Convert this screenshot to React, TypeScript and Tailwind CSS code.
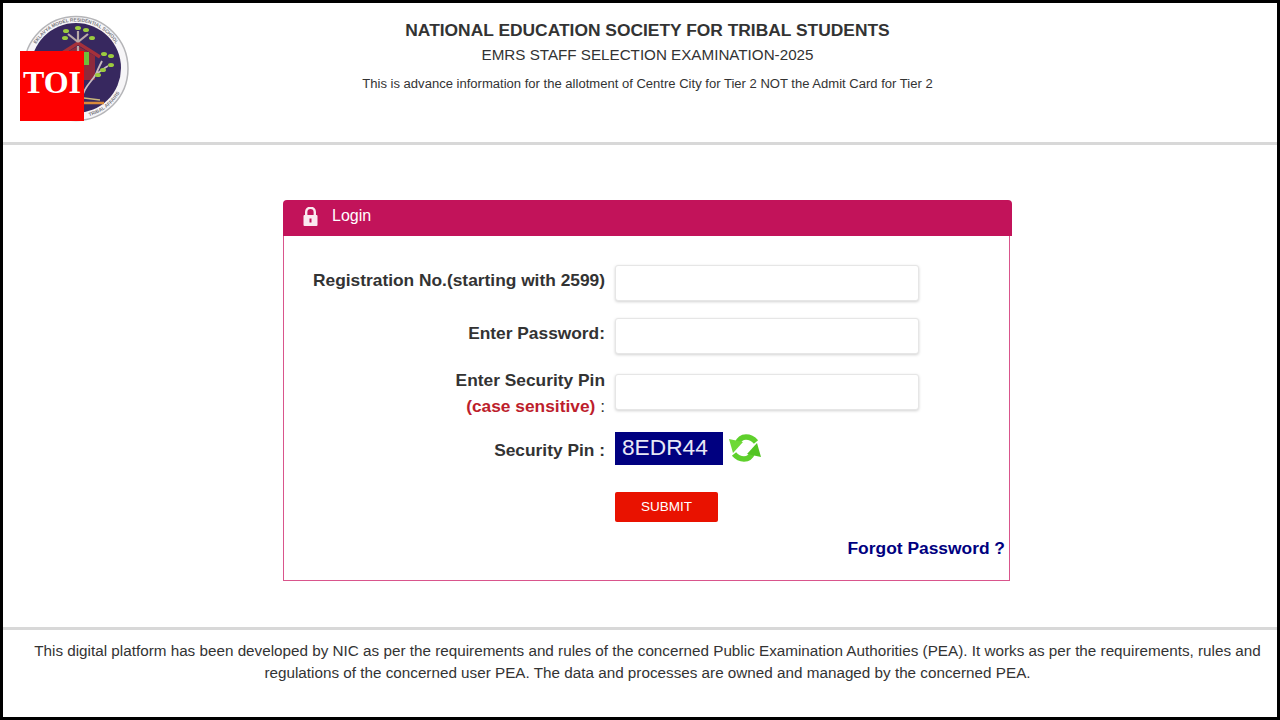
function Logo() {
  return (
    <svg width="112" height="110" viewBox="20 14 112 110" className="block">
      <defs>
        <path id="ringTop" d="M29.500 68a46.500 46.500 0 0 1 93 0" />
        <path id="ringBottom" d="M84 117.300A50 50 0 0 0 122 88" />
      </defs>
      <circle cx="76" cy="68.500" r="52" fill="#f6f5f7" stroke="#b5b5b8" strokeWidth="1.500" />
      <text fontSize="4.800" fontWeight="700" fill="#77757c" fontFamily="'Liberation Sans',sans-serif">
        <textPath href="#ringTop" startOffset="50%" textAnchor="middle">EKLAVYA MODEL RESIDENTIAL SCHOOL</textPath>
      </text>
      <text fontSize="4.800" fontWeight="700" fill="#77757c" fontFamily="'Liberation Sans',sans-serif">
        <textPath href="#ringBottom" startOffset="50%" textAnchor="middle">TRIBAL AFFAIRS</textPath>
      </text>
      <circle cx="76" cy="68" r="45" fill="#37285f" />
      <path d="M56 57L78 43l22 14" fill="none" stroke="#a5303a" strokeWidth="3.500" />
      <path d="M60 56L78 46l17 10v24H60z" fill="#8f2a3c" />
      <path d="M78 100V46M78 42L68 34M78 42l10-8M78 42V31" stroke="#b9a9a9" strokeWidth="2.200" fill="none" />
      <path d="M82 98C84 86 92 82 96 74c2-5 4-9 6-13M96 74c4-2 8-6 12-8" stroke="#c9bcc0" strokeWidth="1.800" fill="none" />
      <rect x="84" y="52" width="5" height="13" fill="#6fbf3a" />
      <path d="M84 98l16 2" stroke="#c9b77a" strokeWidth="1.500" />
      <path d="M84 103h20" stroke="#d98a3a" strokeWidth="2.500" />
      <g fill="#9ccb3f">
        <ellipse cx="66" cy="31" rx="3" ry="2" />
        <ellipse cx="65" cy="38" rx="3" ry="2" />
        <ellipse cx="78" cy="28" rx="3" ry="2" />
        <ellipse cx="86" cy="30" rx="3" ry="2" />
        <ellipse cx="92" cy="38" rx="3" ry="2" />
        <ellipse cx="104" cy="54" rx="3" ry="2" />
        <ellipse cx="111" cy="56" rx="3" ry="2" />
        <ellipse cx="111" cy="65" rx="3" ry="2" />
        <ellipse cx="103" cy="70" rx="3" ry="2" />
        <ellipse cx="98" cy="75" rx="3" ry="2" />
      </g>
    </svg>
  )
}

function Refresh() {
  return (
    <svg width="34" height="34" viewBox="0 0 34 34" className="block">
      <path d="M9 13C11 8 14 6 18 6c4 0 7 1.500 10 5" fill="none" stroke="#5fd02c" strokeWidth="5.500" />
      <path d="M1 8l14 3-10 11z" fill="#6ed935" />
      <path d="M25 21c-2 5-5 7-9 7-4 0-7-1.500-10-5" fill="none" stroke="#5fd02c" strokeWidth="5.500" />
      <path d="M33 26l-14-3 10-11z" fill="#52c422" />
    </svg>
  )
}

function Lock() {
  return (
    <svg width="15" height="19" viewBox="0 0 15 19" className="block">
      <path d="M3.200 8V5a4.300 4.300 0 0 1 8.600 0v3" fill="none" stroke="#fbe9f0" strokeWidth="2.400" />
      <rect x="0.500" y="8" width="14" height="11" rx="1" fill="#fbe9f0" />
      <rect x="6.500" y="11.500" width="2" height="4" fill="#c2135a" />
    </svg>
  )
}

function Field({ className }: { className: string }) {
  return <input className={`block w-[304px] h-[36px] bg-white border border-[#e6e6e6] rounded-[3px] shadow-[0_1px_3px_rgba(0,0,0,0.18)] ${className}`} />
}

export default function App() {
  return (
    <div className="w-[1280px] h-[720px] flex flex-col bg-white border-[3px] border-black text-[#333333] font-['Liberation_Sans',Arial,sans-serif] overflow-hidden">
      <header className="relative h-[142px] shrink-0 border-b-[3px] border-[#d8d8d8] text-center pt-[16px] pl-[15px]">
        <div className="absolute left-[17px] top-[11px]">
          <Logo />
        </div>
        <div className="absolute left-[17px] top-[48px] w-[64px] h-[70px] pb-[8px] bg-[#fe0000] text-white flex items-center justify-center font-['Liberation_Serif',serif] font-bold text-[32px] leading-none">
          TOI
        </div>
        <div className="text-[17.4px] leading-[22px] font-bold">NATIONAL EDUCATION SOCIETY FOR TRIBAL STUDENTS</div>
        <div className="mt-[3px] text-[15.2px] leading-[22px]">EMRS STAFF SELECTION EXAMINATION-2025</div>
        <div className="mt-[8px] text-[13.05px] leading-[20px]">This is advance information for the allotment of Centre City for Tier 2 NOT the Admit Card for Tier 2</div>
      </header>

      <main className="flex-1 pt-[55px] pl-[280px]">
        <div className="w-[729px] h-[36px] bg-[#c2135a] rounded-t-[4px] flex items-center pl-[20px] pb-[4px] text-white">
          <Lock />
          <span className="ml-[14px] text-[16px]">Login</span>
        </div>
        <div className="w-[727px] h-[345px] border-x border-b border-x-[#d9558c] border-b-[#d9558c] pt-[29px]">
          <div className="flex">
            <div className="w-[321px] text-right font-bold text-[17.35px] leading-[22px] pt-[4px]">Registration No.(starting with 2599)</div>
            <Field className="ml-[10px]" />
          </div>
          <div className="flex mt-[17px]">
            <div className="w-[321px] text-right font-bold text-[17.35px] leading-[22px] pt-[4px]">Enter Password:</div>
            <Field className="ml-[10px]" />
          </div>
          <div className="flex mt-[14px]">
            <div className="w-[321px] text-right font-bold text-[17.35px] leading-[26px] -mt-[1px]">
              <div>Enter Security Pin</div>
              <div>
                <span className="text-[#bd1e2c]">(case sensitive)</span> <span className="font-normal">:</span>
              </div>
            </div>
            <Field className="ml-[10px] mt-[6px]" />
          </div>
          <div className="flex items-center mt-[12px]">
            <div className="w-[321px] text-right font-bold text-[17.35px] leading-[22px] pt-[3px]">Security Pin :</div>
            <div className="ml-[10px] w-[108px] h-[33px] bg-[#000080] text-[#e8e8f6] text-[22.7px] leading-[31px] pl-[7px]">8EDR44</div>
            <div className="ml-[5px]">
              <Refresh />
            </div>
          </div>
          <div className="ml-[331px] mt-[27px]">
            <button className="block w-[103px] h-[30px] bg-[#e91200] rounded-[2px] text-white text-[13.5px] leading-[28px]">SUBMIT</button>
          </div>
          <div className="text-right pr-[4px] mt-[15px] text-[#000080] font-bold text-[17.4px] leading-[22px]">Forgot Password ?</div>
        </div>
      </main>

      <footer className="h-[90px] shrink-0 border-t-[3px] border-[#d8d8d8] pt-[10px] text-center text-[15.25px] leading-[22px]">
        <div className="w-[1240px] ml-[24.5px]">
          This digital platform has been developed by NIC as per the requirements and rules of the concerned Public Examination Authorities (PEA). It works as per the requirements, rules and regulations of the concerned user PEA. The data and processes are owned and managed by the concerned PEA.
        </div>
      </footer>
    </div>
  )
}
